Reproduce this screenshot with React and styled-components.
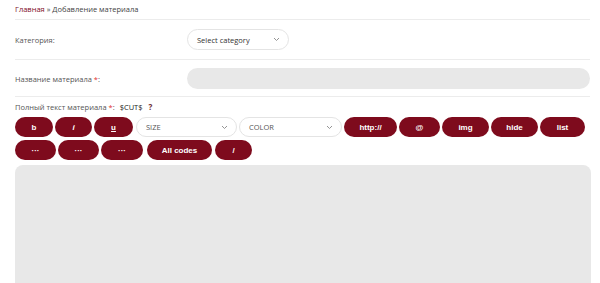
import React from 'react';
import styled, { createGlobalStyle } from 'styled-components';

const Global = createGlobalStyle`
    html, body {
        margin: 0;
        padding: 0;
        background: #fff;
        font-family: "Open Sans", "Liberation Sans", sans-serif;
    }
`

const red = '#7e0b1d'

const Page = styled.div`
    box-sizing: border-box;
    width: 600px;
    height: 283px;
    overflow: hidden;
    padding: 0 10px 0 15px;
    display: flex;
    flex-direction: column;
`

const Crumbs = styled.div`
    height: 20px;
    box-sizing: border-box;
    padding-top: 4px;
    font-size: 7.5px;
    line-height: 10px;
    color: #444;
    border-bottom: 1px solid #ececec;
    a {
        color: ${red};
        text-decoration: none;
    }
`

const Row = styled.div`
    display: grid;
    grid-template-columns: 172px 1fr;
    align-items: center;
    height: ${p => p.h}px;
    border-bottom: 1px solid #ececec;
`

const Label = styled.div`
    font-size: 7.5px;
    color: #555;
    padding-top: 1px;
    span {
        color: #e0302f;
    }
`

const Chevron = () => (
    <svg width="7" height="5" viewBox="0 0 7 5">
        <path d="M1 1 L3.5 3.5 L6 1" fill="none" stroke="#888" strokeWidth="0.9" />
    </svg>
)

const SelectBox = styled.div`
    box-sizing: border-box;
    width: ${p => p.w}px;
    height: ${p => p.h}px;
    border: 1px solid #e4e4e4;
    border-radius: 12px;
    display: flex;
    align-items: center;
    justify-content: space-between;
    padding: 0 8px 0 9px;
    font-size: 7.5px;
    color: ${p => p.dark ? '#333' : '#555'};
    background: #fff;
`

const TextInput = styled.div`
    height: 21px;
    border-radius: 11px;
    background: #e8e8e8;
`

const EditorHead = styled.div`
    box-sizing: border-box;
    display: flex;
    align-items: flex-end;
    height: 20px;
    padding-bottom: 5px;
    font-size: 7.5px;
    line-height: 10px;
    color: #555;
    span.star {
        color: #e0302f;
    }
`

const Cut = styled.span`
    margin-left: 5px;
    color: #222;
    font-size: 7.5px;
`

const Help = styled.span`
    margin-left: 6px;
    color: #6b2a30;
    font-weight: 700;
    font-size: 8px;
`

const Toolbar = styled.div`
    display: flex;
    flex-wrap: wrap;
    column-gap: 2px;
    row-gap: 3px;
    width: 575px;
`

const Btn = styled.button`
    box-sizing: border-box;
    width: ${p => p.w}px;
    height: 20px;
    margin-right: ${p => p.mr || 0}px;
    border: none;
    border-radius: 10px;
    background: ${red};
    color: #fff;
    font-family: "Liberation Sans", Arial, sans-serif;
    font-weight: 700;
    font-size: 8px;
    padding: 0;
    display: flex;
    align-items: center;
    justify-content: center;
`

const Editor = styled.div`
    margin-top: 5px;
    flex: 1;
    width: 576px;
    border-radius: 8px 8px 0 0;
    background: #e8e8e8;
`

const row1 = [
    ['b', 38], ['i', 37], ['u', 39],
]
const row1b = [
    ['http://', 53], ['@', 41], ['img', 47], ['hide', 47], ['list', 45],
]
const row2 = [
    ['···', 41], ['···', 41], ['···', 42, 2], ['All codes', 65, 1], ['/', 37],
]

export default function App() {
    return (
        <Page>
            <Global />
            <Crumbs><a href="#">Главная</a> » Добавление материала</Crumbs>
            <Row h={39}>
                <Label>Категория:</Label>
                <SelectBox w={102} h={21} dark>
                    Select category <Chevron />
                </SelectBox>
            </Row>
            <Row h={36}>
                <Label>Название материала <span>*</span>:</Label>
                <TextInput />
            </Row>
            <EditorHead>
                Полный текст материала&nbsp;<span className="star">*</span>:
                <Cut>$CUT$</Cut>
                <Help>?</Help>
            </EditorHead>
            <Toolbar>
                {row1.map(([t, w], i) => <Btn key={i} w={w} mr={i === 2 ? 1 : 0}>{t === 'i' ? <i>i</i> : t === 'u' ? <u>u</u> : t}</Btn>)}
                <SelectBox w={101} h={20}>SIZE <Chevron /></SelectBox>
                <SelectBox w={103} h={20}>COLOR <Chevron /></SelectBox>
                {row1b.map(([t, w], i) => <Btn key={'b' + i} w={w}>{t}</Btn>)}
                {row2.map(([t, w, mr], i) => <Btn key={'c' + i} w={w} mr={mr}>{t}</Btn>)}
            </Toolbar>
            <Editor />
        </Page>
    )
}
